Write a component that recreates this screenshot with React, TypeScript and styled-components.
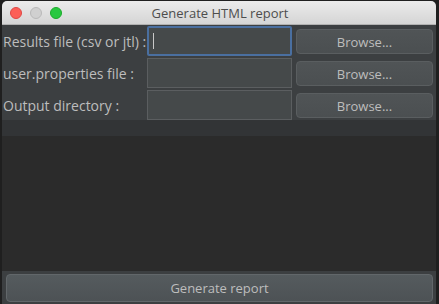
import React from 'react';
import styled, { createGlobalStyle } from 'styled-components';

const GlobalStyle = createGlobalStyle`
  html, body {
    margin: 0;
    padding: 0;
    background: #1f1f1f;
    overflow: hidden;
  }
  body {
    font-family: "Open Sans", "DejaVu Sans", sans-serif;
  }
`;

const rows = [
  { label: 'Results file (csv or jtl) :', focused: true },
  { label: 'user.properties file :', focused: false },
  { label: 'Output directory :', focused: false },
];

export default function App() {
  return (
    <>
      <GlobalStyle />
      <Window>
        <TitleBar>
          <Lights>
            <Light color="#fc5f57" border="#df4744" />
            <Light color="#d0d0d0" border="#b9b9b9" />
            <Light color="#28c840" border="#1aab29" />
          </Lights>
          <Title>Generate HTML report</Title>
        </TitleBar>
        <Form>
          {rows.map((row) => (
            <Row key={row.label}>
              <Label>{row.label}</Label>
              <Field focused={row.focused}>{row.focused && <Caret />}</Field>
              <Button>Browse...</Button>
            </Row>
          ))}
        </Form>
        <Band />
        <Empty />
        <Footer>
          <WideButton>Generate report</WideButton>
        </Footer>
      </Window>
    </>
  );
}

const Window = styled.div`
  margin: 1px 0 0 2px;
  width: 434px;
  height: 310px;
  display: flex;
  flex-direction: column;
  background: #3c3f41;
  border-radius: 5px 5px 0 0;
  overflow: hidden;
`;

const TitleBar = styled.div`
  position: relative;
  height: 23px;
  flex: none;
  display: flex;
  align-items: center;
  justify-content: center;
  background: linear-gradient(#ebebeb, #d5d5d5);
  border-bottom: 1px solid #b1b1b1;
`;

const Lights = styled.div`
  position: absolute;
  left: 8px;
  top: 6px;
  display: flex;
  gap: 8px;
`;

const Light = styled.span<{ color: string; border: string }>`
  width: 12px;
  height: 12px;
  border-radius: 50%;
  box-sizing: border-box;
  background: ${(p) => p.color};
  border: 0.5px solid ${(p) => p.border};
`;

const Title = styled.span`
  font-size: 13px;
  color: #4d4d4d;
  margin-left: 2px;
`;

const Form = styled.div`
  display: flex;
  flex-direction: column;
  gap: 2px;
  padding: 1px 3px 0 1px;
`;

const Row = styled.div`
  display: grid;
  grid-template-columns: 140px 145px 137px;
  column-gap: 4px;
  height: 30px;
  align-items: center;
`;

const Label = styled.span`
  font-size: 14px;
  color: #bdbdbd;
  white-space: nowrap;
`;

const Field = styled.div<{ focused: boolean }>`
  box-sizing: border-box;
  height: 30px;
  background: #45494a;
  border: ${(p) => (p.focused ? '2px solid #4a6fa0' : '1px solid #5b5e60')};
  border-radius: ${(p) => (p.focused ? '2px' : '0')};
  display: flex;
  align-items: center;
  padding-left: ${(p) => (p.focused ? '4px' : '5px')};
`;

const Caret = styled.span`
  width: 1px;
  height: 16px;
  background: #c8c8c8;
`;

const Button = styled.div`
  box-sizing: border-box;
  height: 25px;
  margin-top: 1px;
  border: 1px solid #5a5e60;
  border-radius: 4px;
  background: linear-gradient(#505456, #4b4f51);
  color: #bdbdbd;
  font-size: 13px;
  display: flex;
  align-items: center;
  justify-content: center;
`;

const Band = styled.div`
  height: 16px;
  flex: none;
  background: #323436;
`;

const Empty = styled.div`
  height: 135px;
  flex: none;
  background: #2b2b2b;
`;

const Footer = styled.div`
  flex: 1;
  padding: 3px 3px 0 4px;
  background: #3c3f41;
`;

const WideButton = styled(Button)`
  height: 28px;
  margin-top: 0;
  background: linear-gradient(#555b5e, #4d5255);
  border-color: #62676a;
`;
